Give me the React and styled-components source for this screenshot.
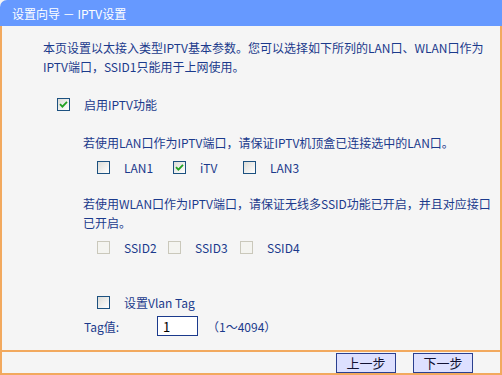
import React from 'react';
import styled, { createGlobalStyle } from 'styled-components';

const GlobalStyle = createGlobalStyle`
    body {
        margin: 0;
        background: #ffffff;
        font-family: "Noto Sans CJK SC", "DejaVu Sans", sans-serif;
    }
`;

const Frame = styled.div`
    width: 502px;
    height: 375px;
    box-sizing: border-box;
    display: flex;
    flex-direction: column;
    background: #f5f5f5;
    font-size: 12px;
    line-height: 19px;
    color: #1b3a8c;
    overflow: hidden;
`;

const TitleBar = styled.div`
    height: 26px;
    flex: none;
    display: flex;
    align-items: center;
    padding-left: 12px;
    background: #6699ff;
    border-top-left-radius: 7px;
    color: #ffffff;
    font-size: 12px;
    white-space: pre;
`;

const Body = styled.div`
    flex: 1;
    min-height: 0;
    display: flex;
    flex-direction: column;
    border-left: 2px solid #f2a95e;
    border-right: 2px solid #f2a95e;
    border-bottom: 2px solid #f2a95e;
`;

const Content = styled.div`
    flex: 1;
    min-height: 0;
    display: flex;
    flex-direction: column;
    overflow: hidden;
`;

const Para = styled.div`
    margin-top: ${({ $top }) => $top}px;
    padding-left: ${({ $indent }) => $indent}px;
    line-height: 19px;
    white-space: nowrap;
`;

const Row = styled.div`
    flex: none;
    margin-top: ${({ $top }) => $top}px;
    padding-left: ${({ $indent }) => $indent}px;
    height: 20px;
    display: flex;
    align-items: center;
    white-space: nowrap;
`;

const Box = styled.span`
    width: 13px;
    height: 13px;
    flex: none;
    box-sizing: border-box;
    display: inline-flex;
    align-items: center;
    justify-content: center;
    border: 1px solid ${({ $disabled }) => ($disabled ? '#cac8bb' : '#1c5180')};
    background: ${({ $disabled }) =>
        $disabled ? '#f4f4f0' : 'linear-gradient(135deg, #dcdcd7 0%, #ffffff 100%)'};
`;

const Label = styled.span`
    margin-left: 14px;
    width: ${({ $w }) => ($w ? `${$w}px` : 'auto')};
    flex: none;
    white-space: pre;
`;

const TagLabel = styled.span`
    width: 73px;
    flex: none;
`;

const TagInput = styled.input`
    width: 41px;
    height: 20px;
    box-sizing: border-box;
    margin: 0;
    padding: 0 0 0 5px;
    border: 1px solid #1b3a8c;
    background: #ffffff;
    color: #000000;
    font-family: "Noto Sans CJK SC", "DejaVu Sans", sans-serif;
    font-size: 13px;
    outline: none;
`;

const Range = styled.span`
    margin-left: 9px;
`;

const Footer = styled.div`
    height: 21px;
    flex: none;
    display: flex;
    justify-content: flex-end;
    align-items: center;
    gap: 17px;
    padding-right: 27px;
    border-top: 2px solid #f2a95e;
`;

const Button = styled.button`
    width: 60px;
    height: 20px;
    box-sizing: border-box;
    margin: 0;
    padding: 0;
    border: 1px solid #2a3f8f;
    background: #dde0ff;
    color: #111133;
    font-family: "Noto Sans CJK SC", "DejaVu Sans", sans-serif;
    font-size: 13px;
    line-height: 18px;
`;

const Check = () => (
    <svg width="9" height="9" viewBox="0 0 9 9">
        <path d="M1 4.2 L3.4 6.6 L8 1.8" fill="none" stroke="#21a121" strokeWidth="1.8" />
    </svg>
);

const Option = ({ checked, disabled, label, width }) => (
    <>
        <Box $disabled={disabled}>{checked && <Check />}</Box>
        <Label $w={width}>{label}</Label>
    </>
);

const App = () => (
    <Frame>
        <GlobalStyle />
        <TitleBar>设置向导 － IPTV设置</TitleBar>
        <Body>
            <Content>
                <Para $top={12} $indent={41}>
                    本页设置以太接入类型IPTV基本参数。您可以选择如下所列的LAN口、WLAN口作为
                    <br />
                    IPTV端口，SSID1只能用于上网使用。
                </Para>
                <Row $top={18} $indent={55}>
                    <Option checked label="启用IPTV功能" />
                </Row>
                <Row $top={18} $indent={81}>
                    若使用LAN口作为IPTV端口，请保证IPTV机顶盒已连接选中的LAN口。
                </Row>
                <Row $top={5} $indent={95}>
                    <Option label="LAN1" width={49} />
                    <Option checked label="iTV" width={43} />
                    <Option label="LAN3" />
                </Row>
                <Para $top={17} $indent={81}>
                    若使用WLAN口作为IPTV端口，请保证无线多SSID功能已开启，并且对应接口
                    <br />
                    已开启。
                </Para>
                <Row $top={5} $indent={95}>
                    <Option disabled label="SSID2" width={44} />
                    <Option disabled label="SSID3" width={45} />
                    <Option disabled label="SSID4" />
                </Row>
                <Row $top={35} $indent={95}>
                    <Option label="设置Vlan Tag" />
                </Row>
                <Row $top={4} $indent={82}>
                    <TagLabel>Tag值:</TagLabel>
                    <TagInput defaultValue="1" />
                    <Range>（1～4094）</Range>
                </Row>
            </Content>
            <Footer>
                <Button>上一步</Button>
                <Button>下一步</Button>
            </Footer>
        </Body>
    </Frame>
);

export default App;
